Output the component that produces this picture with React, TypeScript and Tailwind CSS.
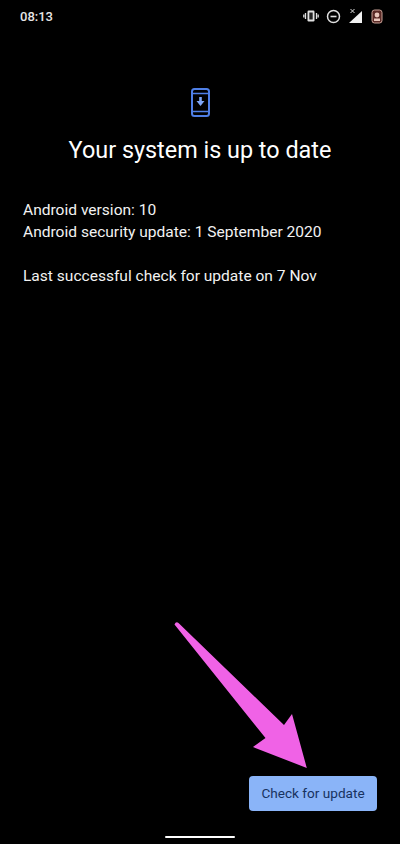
export default function App() {
  return (
    <div className="relative flex h-[844px] w-[400px] flex-col overflow-hidden bg-black font-['Roboto',sans-serif] text-white">
      <div className="flex h-[32px] items-center justify-between pl-[20px] pr-[17px]">
        <span className="pt-[1px] text-[13px] font-medium leading-none text-[#e6e6e6]">08:13</span>
        <div className="flex items-center gap-[5px]">
          <svg width="16" height="14" viewBox="0 0 16 14" fill="none">
            <rect x="4.5" y="1.5" width="7" height="11" rx="1.2" fill="#e0e0e0" />
            <rect x="6.3" y="3.5" width="3.4" height="7" fill="#222" />
            <path d="M2.5 4v6M0.8 5.5v3M13.5 4v6M15.2 5.5v3" stroke="#ddd" strokeWidth="1.3" />
          </svg>
          <svg width="15" height="15" viewBox="0 0 15 15" fill="none" className="ml-[2px]">
            <circle cx="7.5" cy="7.5" r="6" stroke="#e0e0e0" strokeWidth="1.5" />
            <path d="M4.5 7.5h6" stroke="#e0e0e0" strokeWidth="1.6" />
          </svg>
          <svg width="15" height="16" viewBox="0 0 15 16" fill="none" className="ml-[2px]">
            <path d="M14 3v12H1z" fill="#f2f2f2" />
            <path d="M2.5 1l4 4M6.5 1l-4 4" stroke="#ddd" strokeWidth="1" />
          </svg>
          <svg width="12" height="15" viewBox="0 0 12 15" fill="none" className="ml-[3px]">
            <rect x="1" y="1" width="10" height="13" rx="2.5" fill="#5a2a26" stroke="#c9a297" strokeWidth="1" />
            <circle cx="6" cy="6" r="2.4" fill="#e9c7bc" />
            <rect x="3" y="9.5" width="6" height="2.5" fill="#e9c7bc" />
          </svg>
        </div>
      </div>

      <div className="mt-[56px] flex justify-center">
        <svg width="19" height="29" viewBox="0 0 19 29" fill="none">
          <rect x="1" y="1" width="17" height="27" rx="2.5" stroke="#4f7fe6" strokeWidth="2" />
          <path d="M1 5.5h17M1 23.5h17" stroke="#4f7fe6" strokeWidth="1.6" />
          <path d="M9.5 9v6" stroke="#7fa6f5" strokeWidth="2.6" />
          <path d="M5.5 13h8l-4 5z" fill="#7fa6f5" />
        </svg>
      </div>

      <h1 className="mt-[18px] text-center text-[23.4px] font-normal leading-[30px] text-white">Your system is up to date</h1>

      <div className="mt-[34px] px-[23px] text-[15.55px] leading-[22px] text-[#f2f2f2]">
        <p>Android version: 10</p>
        <p>Android security update: 1 September 2020</p>
        <p className="mt-[22px]">Last successful check for update on 7 Nov</p>
      </div>

      <div className="mt-auto flex justify-end pr-[23px]">
        <button className="flex h-[35px] w-[128px] items-center justify-center rounded-[4px] bg-[#8ab4f8] text-[13.6px] leading-none text-[#173260]">
          Check for update
        </button>
      </div>
      <div className="mt-[25px] mb-[6px] flex justify-center">
        <div className="h-[2px] w-[70px] rounded-full bg-white" />
      </div>

      <svg className="absolute left-0 top-0" width="400" height="844" viewBox="0 0 400 844" fill="none">
        <path d="M174.5 624.5 Q176 621 178.5 623 L284 725 L292 714 L306.8 768 L253 747 L265.5 738 Z" fill="#f062e6" />
      </svg>
    </div>
  );
}
